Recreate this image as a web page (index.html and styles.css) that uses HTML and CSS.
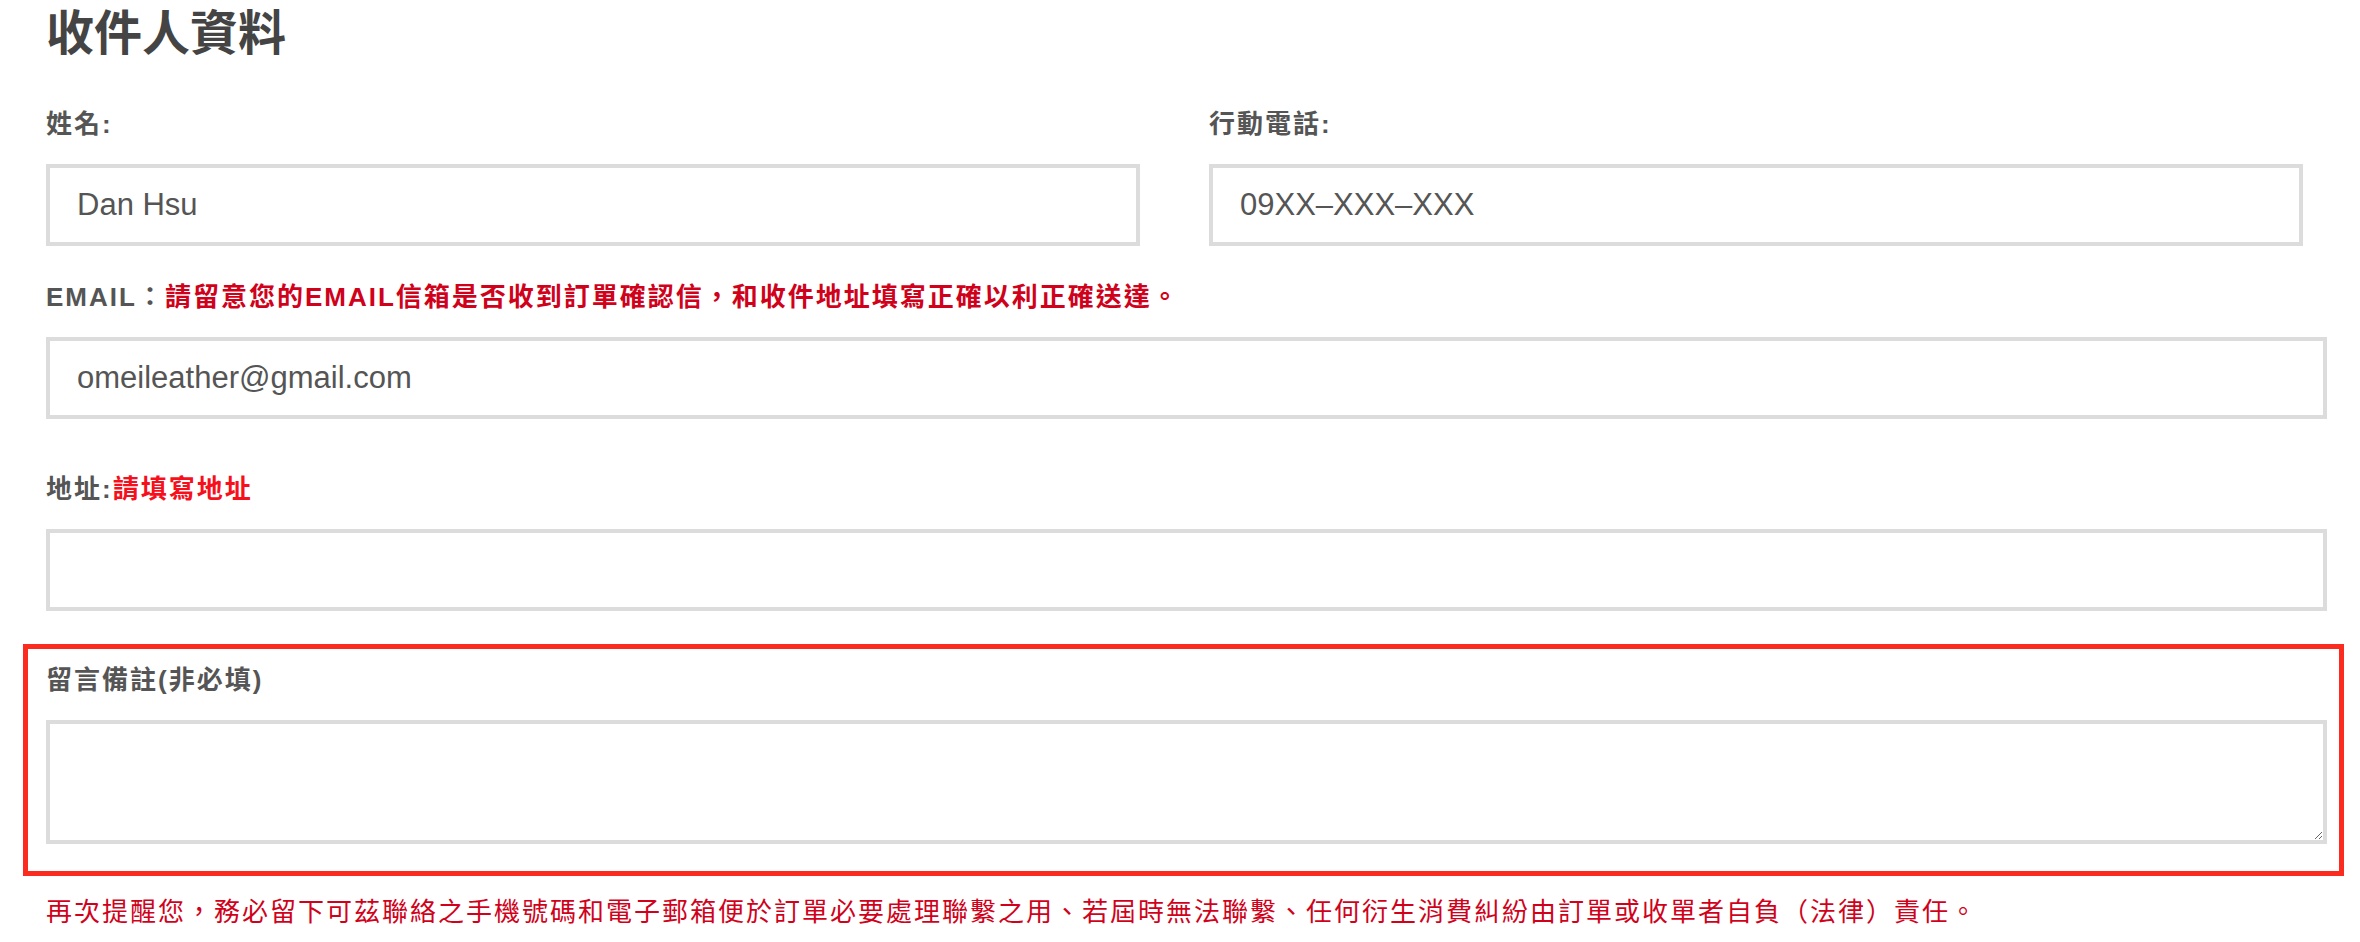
FILE: index.html
```html
<!DOCTYPE html>
<html lang="zh-Hant">
<head>
    <meta charset="UTF-8">
    <meta name="viewport" content="width=device-width, initial-scale=1.0">
    <title>收件人資料</title>
    <link rel="stylesheet" href="styles.css">
</head>
<body>
    <div class="page">
        <h1 class="title">收件人資料</h1>
        <div class="row field">
            <div>
                <label class="label" for="name">姓名:</label>
                <input class="input" id="name" type="text" value="Dan Hsu">
            </div>
            <div>
                <label class="label" for="mobile">行動電話:</label>
                <input class="input" id="mobile" type="text" value="09XX–XXX–XXX">
            </div>
        </div>
        <div class="field field-wide">
            <label class="label" for="email">EMAIL：<span class="note">請留意您的EMAIL信箱是否收到訂單確認信，和收件地址填寫正確以利正確送達。</span></label>
            <input class="input" id="email" type="text" value="omeileather@gmail.com">
        </div>
        <div class="field">
            <label class="label" for="address">地址:<span class="note-bright">請填寫地址</span></label>
            <input class="input" id="address" type="text" value="">
        </div>
        <div class="memo-box">
            <label class="label" for="memo">留言備註(非必填)</label>
            <textarea class="memo" id="memo"></textarea>
        </div>
        <p class="reminder">再次提醒您，務必留下可茲聯絡之手機號碼和電子郵箱便於訂單必要處理聯繫之用、若屆時無法聯繫、任何衍生消費糾紛由訂單或收單者自負（法律）責任。</p>
    </div>
</body>
</html>
```

FILE: styles.css
```css
body { margin: 0; background: #fff; font-family: "Liberation Sans", "Noto Sans CJK TC", sans-serif; }
.page { padding: 2px 33px 0 46px; }
.title { margin: 0 0 40px; font-size: 48px; line-height: 64px; font-weight: 700; color: #444; }
.row { display: grid; grid-template-columns: 1fr 1fr; column-gap: 69px; padding-right: 24px; }
.field { margin-bottom: 33px; }
.field-wide { margin-bottom: 52px; }
.label { display: block; margin-bottom: 22px; font-size: 26px; line-height: 36px; font-weight: 700; letter-spacing: 2px; color: #555; }
.note { color: #d0021b; }
.note-bright { color: #f5101c; }
.input { display: block; width: 100%; height: 82px; box-sizing: border-box; padding: 0 27px; border: 4px solid #dcdcdc; border-radius: 0; outline: none; font-family: "Liberation Sans", sans-serif; font-size: 31px; color: #555; background: #fff; }
.memo-box { margin: 0 -17px 0 -23px; padding: 13px 12px 27px 18px; border: 5px solid #fb2b20; }
.memo { display: block; width: 100%; height: 124px; box-sizing: border-box; border: 4px solid #dcdcdc; border-radius: 0; outline: none; font-size: 30px; background: #fff; }
.reminder { margin: 18px 0 0; font-size: 26px; line-height: 36px; letter-spacing: 2px; color: #d0021b; }
```
